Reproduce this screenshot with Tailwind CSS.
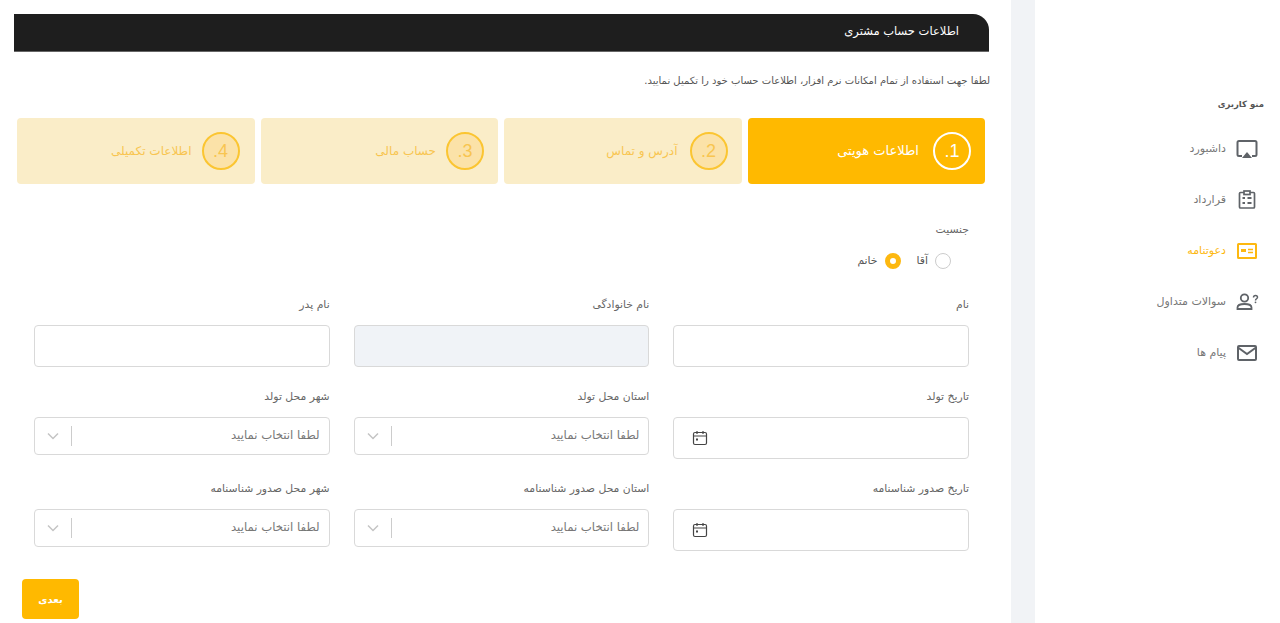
<!DOCTYPE html>
<html lang="fa" dir="rtl">
<head>
<meta charset="utf-8">
<script src="https://cdn.jsdelivr.net/npm/@tailwindcss/browser@4"></script>
</head>
<body class="h-[623px] w-[1280px] overflow-hidden bg-white font-['DejaVu_Sans','Liberation_Sans',sans-serif] text-[#555]">
<div class="flex h-[623px] w-[1280px] flex-row">
  <!-- sidebar -->
  <aside class="h-full w-[245px] shrink-0 bg-white pt-[97px] pr-[16px]">
    <div class="h-[14px] text-[8.5px] leading-[14px] font-bold text-[#555]">منو کاربری</div>
    <nav class="mt-[24px] flex flex-col gap-[23px] pr-[5px] text-[11px] text-[#777]">
      <a class="flex h-[28px] items-center gap-[9px]">
        <svg class="h-[24px] w-[24px] shrink-0" viewBox="0 0 24 24" fill="none" stroke="#5f6368" stroke-width="2"><path d="M7 19H4a1.500 1.500 0 0 1-1.500-1.500V5.500A1.500 1.500 0 0 1 4 4h16a1.500 1.500 0 0 1 1.500 1.500v12A1.500 1.500 0 0 1 20 19h-3"/><path d="M12 15l5 6H7z" fill="#5f6368" stroke="none"/></svg>
        <span>داشبورد</span>
      </a>
      <a class="flex h-[28px] items-center gap-[9px]">
        <svg class="h-[24px] w-[24px] shrink-0" viewBox="0 0 24 24" fill="none" stroke="#5f6368" stroke-width="1.700"><rect x="4.500" y="4.500" width="15" height="15.500" rx="1"/><rect x="9" y="3" width="6" height="3.500" fill="#fff"/><path d="M7.500 10h2.500M7.500 15h2.500M12.500 10h4M12.500 15h4" stroke-width="2"/></svg>
        <span>قرارداد</span>
      </a>
      <a class="flex h-[28px] items-center gap-[9px] text-[#fdb810]">
        <svg class="h-[24px] w-[24px] shrink-0" viewBox="0 0 24 24" fill="none" stroke="#fdb810" stroke-width="2"><rect x="3" y="5" width="18" height="14" rx="0.500"/><path d="M6 10h5v3H6z" fill="#fdb810" stroke="none"/><path d="M13 10.500h5M13 13.500h5" stroke-width="1.300"/></svg>
        <span>دعوتنامه</span>
      </a>
      <a class="flex h-[28px] items-center gap-[9px]">
        <svg class="h-[24px] w-[24px] shrink-0" viewBox="0 0 24 24" fill="none" stroke="#5f6368" stroke-width="1.800"><circle cx="9.500" cy="8" r="3.700"/><path d="M2.500 19v-1.500c0-2.500 4-3.500 7-3.500s7 1 7 3.500V19z"/><path d="M18.500 7.500c0-1.300 1-2 2-2s2 .7 2 1.800c0 1.500-2 1.500-2 3.200" stroke-width="1.500"/><circle cx="20.500" cy="12.300" r=".9" fill="#5f6368" stroke="none"/></svg>
        <span>سوالات متداول</span>
      </a>
      <a class="flex h-[28px] items-center gap-[9px]">
        <svg class="h-[24px] w-[24px] shrink-0" viewBox="0 0 24 24" fill="none" stroke="#5f6368" stroke-width="2"><rect x="3" y="5" width="18" height="14" rx="1"/><path d="M3 6.500l9 6.500 9-6.500"/></svg>
        <span>پیام ها</span>
      </a>
    </nav>
  </aside>
  <!-- gutter -->
  <div class="h-full w-[24px] shrink-0 bg-[#f1f3f6]"></div>
  <!-- main -->
  <main class="h-full w-[1011px] shrink-0 bg-white pt-[14px]">
    <div class="mr-[22px] ml-[14px] flex h-[38px] items-center rounded-tr-[16px] border-b border-[#666] bg-[#1e1e1e] pr-[30px] pb-[2px] text-[11.5px] text-white">اطلاعات حساب مشتری</div>
    <p class="mt-[21px] mr-[21px] h-[16px] text-[10px] leading-[16px] text-[#555]">لطفا جهت استفاده از تمام امکانات نرم افزار، اطلاعات حساب خود را تکمیل نمایید.</p>

    <div class="mt-[29px] mr-[26px] ml-[17px] grid h-[66px] grid-cols-4 gap-[6px] text-[12px]">
      <div class="flex items-center gap-[14px] rounded-[4px] bg-[#ffb900] pr-[14px] text-[13px] text-white">
        <span class="flex h-[38px] w-[38px] items-center justify-center rounded-full border-2 border-white font-['Liberation_Sans'] text-[18px]" dir="ltr">.1</span><span>اطلاعات هویتی</span>
      </div>
      <div class="flex items-center gap-[12px] rounded-[4px] bg-[#faedc8] pr-[14px] text-[#f8c550]">
        <span class="flex h-[38px] w-[38px] items-center justify-center rounded-full border-2 border-[#fbc531] bg-[#fbe2a8] font-['Liberation_Sans'] text-[18px]" dir="ltr">.2</span><span>آدرس و تماس</span>
      </div>
      <div class="flex items-center gap-[10px] rounded-[4px] bg-[#faedc8] pr-[14px] text-[#f8c550]">
        <span class="flex h-[38px] w-[38px] items-center justify-center rounded-full border-2 border-[#fbc531] bg-[#fbe2a8] font-['Liberation_Sans'] text-[18px]" dir="ltr">.3</span><span>حساب مالی</span>
      </div>
      <div class="flex items-center gap-[10px] rounded-[4px] bg-[#faedc8] pr-[15px] text-[#f8c550]">
        <span class="flex h-[38px] w-[38px] items-center justify-center rounded-full border-2 border-[#fbc531] bg-[#fbe2a8] font-['Liberation_Sans'] text-[18px]" dir="ltr">.4</span><span>اطلاعات تکمیلی</span>
      </div>
    </div>

    <div class="mt-[36px] mr-[42px] ml-[34px] text-[10.8px]">
      <div class="h-[18px] leading-[20px] text-[#666]">جنسیت</div>
      <div class="mt-[14px] flex h-[18px] items-center gap-[16px] pr-[18px] text-[#555]" >
        <label class="flex items-center gap-[7px]"><span class="h-[16px] w-[16px] rounded-full border border-[#ccc]"></span>آقا</label>
        <label class="flex items-center gap-[7px]"><span class="h-[16px] w-[16px] rounded-full border-[5px] border-[#fdb810] bg-white"></span>خانم</label>
      </div>

      <div class="mt-[27px] grid grid-cols-3 gap-x-[24px]">
        <div><div class="h-[27px] leading-[15px] text-[#666]">نام</div><div class="mt-[1px] h-[42px] rounded-[4px] border border-[#d9d9d9]"></div></div>
        <div><div class="h-[27px] leading-[15px] text-[#666]">نام خانوادگی</div><div class="mt-[1px] h-[42px] rounded-[4px] border border-[#d9d9d9] bg-[#f0f3f7]"></div></div>
        <div><div class="h-[27px] leading-[15px] text-[#666]">نام پدر</div><div class="mt-[1px] h-[42px] rounded-[4px] border border-[#d9d9d9]"></div></div>
      </div>

      <div class="mt-[22px] grid grid-cols-3 items-start gap-x-[24px]">
        <div><div class="h-[27px] leading-[15px] text-[#666]">تاریخ تولد</div><div class="mt-[1px] flex h-[42px] items-center justify-end rounded-[4px] border border-[#d9d9d9] pl-[18px]"><svg class="h-[16px] w-[16px]" viewBox="0 0 16 16" fill="none" stroke="#444" stroke-width="1.200"><rect x="1.500" y="2.500" width="13" height="12" rx="1.500"/><path d="M1.500 6h13M5 1v3M11 1v3"/><rect x="4" y="8.500" width="2" height="2" fill="#444" stroke="none"/></svg></div></div>
        <div><div class="h-[27px] leading-[15px] text-[#666]">استان محل تولد</div><div class="mt-[1px] flex h-[38px] items-center rounded-[4px] border border-[#d9d9d9] pr-[9px] text-[11.7px] text-[#777]"><span class="flex-1">لطفا انتخاب نمایید</span><span class="h-[20px] border-l border-[#ccc]"></span><svg class="mx-[10px] h-[16px] w-[16px]" viewBox="0 0 16 16" fill="none" stroke="#c4c4c4" stroke-width="1.500"><path d="M3 5.500l5 5 5-5"/></svg></div></div>
        <div><div class="h-[27px] leading-[15px] text-[#666]">شهر محل تولد</div><div class="mt-[1px] flex h-[38px] items-center rounded-[4px] border border-[#d9d9d9] pr-[9px] text-[11.7px] text-[#777]"><span class="flex-1">لطفا انتخاب نمایید</span><span class="h-[20px] border-l border-[#ccc]"></span><svg class="mx-[10px] h-[16px] w-[16px]" viewBox="0 0 16 16" fill="none" stroke="#c4c4c4" stroke-width="1.500"><path d="M3 5.500l5 5 5-5"/></svg></div></div>
      </div>

      <div class="mt-[22px] grid grid-cols-3 items-start gap-x-[24px]">
        <div><div class="h-[27px] leading-[15px] text-[#666]">تاریخ صدور شناسنامه</div><div class="mt-[1px] flex h-[42px] items-center justify-end rounded-[4px] border border-[#d9d9d9] pl-[18px]"><svg class="h-[16px] w-[16px]" viewBox="0 0 16 16" fill="none" stroke="#444" stroke-width="1.200"><rect x="1.500" y="2.500" width="13" height="12" rx="1.500"/><path d="M1.500 6h13M5 1v3M11 1v3"/><rect x="4" y="8.500" width="2" height="2" fill="#444" stroke="none"/></svg></div></div>
        <div><div class="h-[27px] leading-[15px] text-[#666]">استان محل صدور شناسنامه</div><div class="mt-[1px] flex h-[38px] items-center rounded-[4px] border border-[#d9d9d9] pr-[9px] text-[11.7px] text-[#777]"><span class="flex-1">لطفا انتخاب نمایید</span><span class="h-[20px] border-l border-[#ccc]"></span><svg class="mx-[10px] h-[16px] w-[16px]" viewBox="0 0 16 16" fill="none" stroke="#c4c4c4" stroke-width="1.500"><path d="M3 5.500l5 5 5-5"/></svg></div></div>
        <div><div class="h-[27px] leading-[15px] text-[#666]">شهر محل صدور شناسنامه</div><div class="mt-[1px] flex h-[38px] items-center rounded-[4px] border border-[#d9d9d9] pr-[9px] text-[11.7px] text-[#777]"><span class="flex-1">لطفا انتخاب نمایید</span><span class="h-[20px] border-l border-[#ccc]"></span><svg class="mx-[10px] h-[16px] w-[16px]" viewBox="0 0 16 16" fill="none" stroke="#c4c4c4" stroke-width="1.500"><path d="M3 5.500l5 5 5-5"/></svg></div></div>
      </div>
    </div>

    <div class="mt-[28px] ml-[22px] flex justify-end">
      <button class="h-[40px] w-[57px] rounded-[4px] bg-[#ffb900] text-[10px] font-bold text-white">بعدی</button>
    </div>
  </main>
</div>
</body>
</html>
